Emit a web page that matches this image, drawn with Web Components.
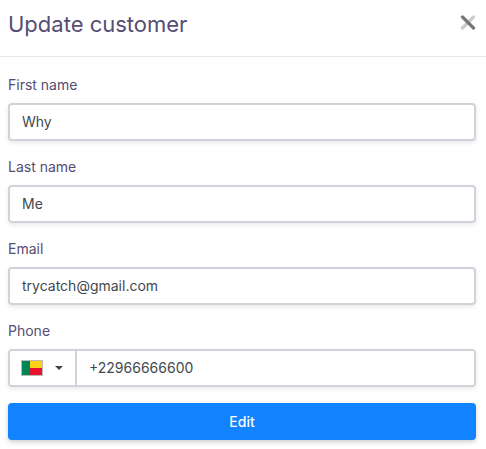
<!DOCTYPE html>
<html lang="en">
<head>
<meta charset="utf-8">
<meta name="viewport" content="width=device-width, initial-scale=1">
<title>Update customer</title>
<style>
  body {
    margin: 0;
    background: #fff;
    color: #564d74;
    font-family: Inter, 'Noto Sans', sans-serif;
    font-size: 14px;
    line-height: 20px;
    --field-border: #ced4da;
    --field-color: #43484e;
    --field-shadow: 0 2px 5px rgba(0, 0, 0, 0.09);
    --primary: #1283ff;
  }
</style>
</head>
<body>
<customer-modal heading="Update customer">
  <customer-form></customer-form>
</customer-modal>

<template id="customer-modal">
  <style>
    :host {
      display: block;
    }
    header {
      display: flex;
      justify-content: space-between;
      align-items: center;
      height: 57px;
      padding: 0 10px 0 8px;
      border-bottom: 1px solid #e8e8e8;
      box-sizing: border-box;
    }
    h2 {
      margin: 0 0 8px;
      font-size: 22px;
      line-height: 32px;
      font-weight: 400;
    }
    .close {
      display: flex;
      margin: 0 0 12px;
      padding: 0;
      border: 0;
      background: none;
      cursor: pointer;
    }
    main {
      padding: 18px 10px 8px 8px;
    }
  </style>
  <header>
    <h2></h2>
    <button class="close" type="button" aria-label="Close">
      <svg width="16" height="16" viewBox="0 0 16 16" fill="none" stroke-width="3.2" stroke-linecap="round">
        <path d="M13.5 3L2.5 14" stroke="#ccc"></path>
        <path d="M2.5 3L13.5 14" stroke="#777"></path>
      </svg>
    </button>
  </header>
  <main><slot></slot></main>
</template>

<template id="text-field">
  <style>
    :host {
      display: block;
    }
    label {
      display: block;
      margin-bottom: 8px;
    }
    input {
      display: block;
      width: 100%;
      height: 38px;
      padding: 0 12px 2px;
      box-sizing: border-box;
      border: 2px solid var(--field-border);
      border-radius: 4px;
      box-shadow: var(--field-shadow);
      background: #fff;
      color: var(--field-color);
      font: inherit;
      outline: 0;
    }
    input:focus {
      border-color: var(--primary);
    }
  </style>
  <label for="input"></label>
  <input id="input">
</template>

<template id="phone-field">
  <style>
    :host {
      display: block;
    }
    label {
      display: block;
      margin-bottom: 8px;
    }
    .group {
      display: flex;
      height: 38px;
      box-sizing: border-box;
      border: 2px solid var(--field-border);
      border-radius: 4px;
      box-shadow: var(--field-shadow);
      overflow: hidden;
    }
    button {
      display: flex;
      align-items: center;
      gap: 12px;
      padding: 0 12px 0 11px;
      border: 0;
      border-right: 2px solid var(--field-border);
      background: #fff;
      cursor: pointer;
    }
    input {
      flex: 1;
      min-width: 0;
      padding: 0 12px;
      border: 0;
      background: #fff;
      color: var(--field-color);
      font: inherit;
      outline: 0;
    }
  </style>
  <label for="input"></label>
  <div class="group">
    <button type="button" aria-label="Country: Benin" aria-haspopup="listbox">
      <svg width="22" height="16" viewBox="0 0 22 16">
        <path d="M0 0h22v16H0z" fill="#bbb"></path>
        <path d="M1 1h8v14H1z" fill="#008751"></path>
        <path d="M9 1h12v7H9z" fill="#fcd116"></path>
        <path d="M9 8h12v7H9z" fill="#e8112d"></path>
      </svg>
      <svg width="8" height="4" viewBox="0 0 8 4">
        <path d="M0 0h8L4 4z" fill="#444"></path>
      </svg>
    </button>
    <input id="input" type="tel">
  </div>
</template>

<template id="customer-form">
  <style>
    :host {
      display: block;
    }
    form {
      display: flex;
      flex-direction: column;
      gap: 16px;
    }
    .submit {
      height: 37px;
      padding: 0 12px;
      border: 0;
      border-radius: 4px;
      box-shadow: 0 2px 5px rgba(0, 0, 0, 0.2);
      background: var(--primary);
      color: #fff;
      font: inherit;
      font-weight: 500;
      cursor: pointer;
    }
  </style>
  <form>
    <text-field label="First name" value="Why"></text-field>
    <text-field label="Last name" value="Me"></text-field>
    <text-field label="Email" type="email" value="trycatch@gmail.com"></text-field>
    <phone-field label="Phone" value="+22966666600"></phone-field>
    <button class="submit" type="submit">Edit</button>
  </form>
</template>

<script>
  function render(host, id) {
    const root = host.attachShadow({ mode: 'open' });
    root.appendChild(document.getElementById(id).content.cloneNode(true));
    return root;
  }

  class TextField extends HTMLElement {
    connectedCallback() {
      if (this.shadowRoot) return;
      const root = render(this, 'text-field');
      const input = root.querySelector('input');
      root.querySelector('label').textContent = this.getAttribute('label');
      input.type = this.getAttribute('type') || 'text';
      input.value = this.getAttribute('value') || '';
    }
  }

  class PhoneField extends HTMLElement {
    connectedCallback() {
      if (this.shadowRoot) return;
      const root = render(this, 'phone-field');
      root.querySelector('label').textContent = this.getAttribute('label');
      root.querySelector('input').value = this.getAttribute('value') || '';
    }
  }

  class CustomerForm extends HTMLElement {
    connectedCallback() {
      if (this.shadowRoot) return;
      const root = render(this, 'customer-form');
      root.querySelector('form').addEventListener('submit', (event) => {
        event.preventDefault();
        this.dispatchEvent(new CustomEvent('save', { bubbles: true, composed: true }));
      });
    }
  }

  class CustomerModal extends HTMLElement {
    connectedCallback() {
      if (this.shadowRoot) return;
      const root = render(this, 'customer-modal');
      root.querySelector('h2').textContent = this.getAttribute('heading');
      root.querySelector('.close').addEventListener('click', () => {
        this.style.display = 'none';
      });
    }
  }

  customElements.define('text-field', TextField);
  customElements.define('phone-field', PhoneField);
  customElements.define('customer-form', CustomerForm);
  customElements.define('customer-modal', CustomerModal);
</script>
</body>
</html>
